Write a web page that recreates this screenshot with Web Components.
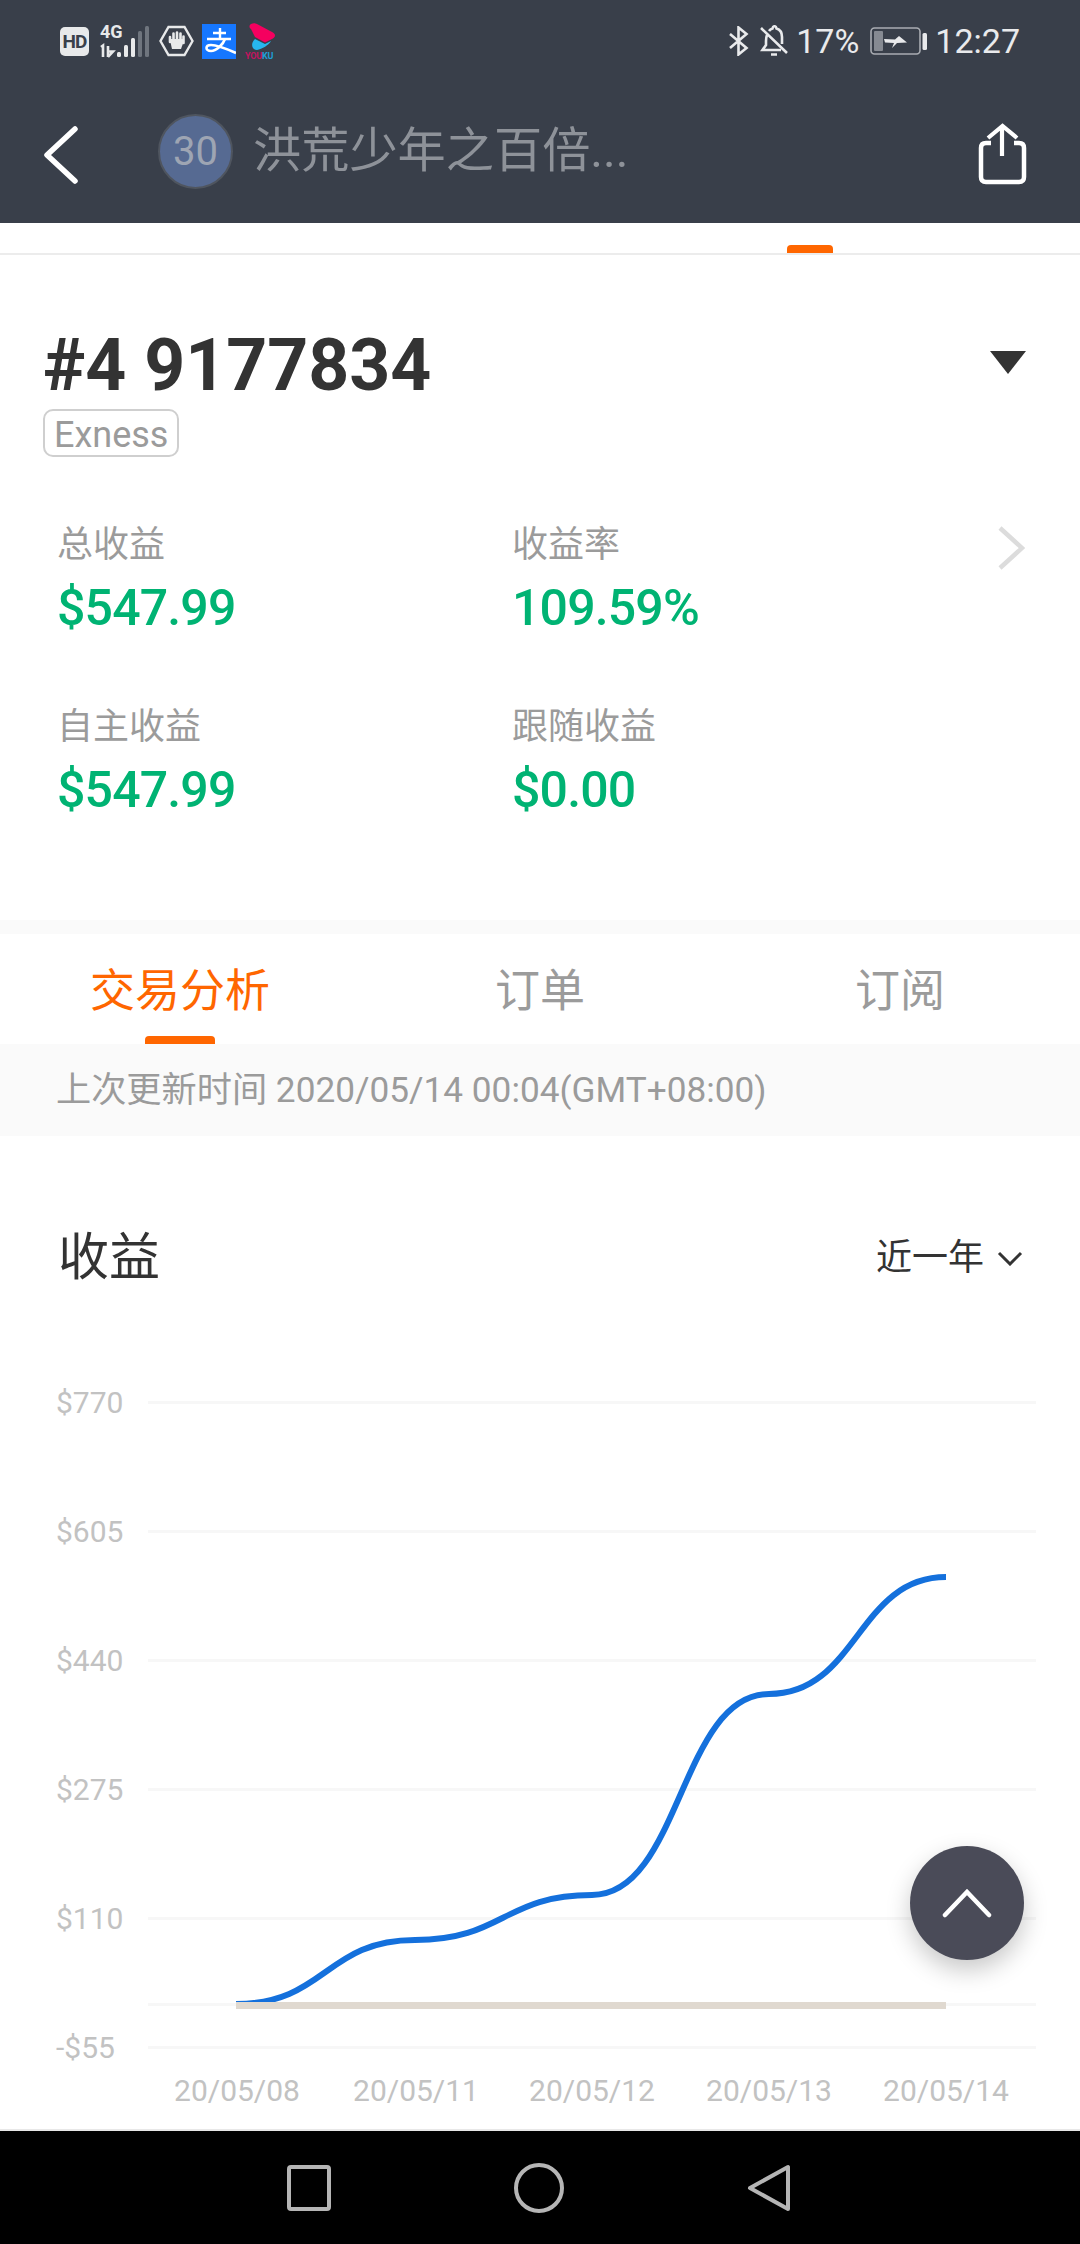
<!DOCTYPE html>
<html lang="zh">
<head>
<meta charset="utf-8">
<title>#4 9177834</title>
<style>
  html, body { margin: 0; padding: 0; background: #fff; }
  body {
    width: 1080px; height: 2244px; overflow: hidden; position: relative;
    font-family: Roboto, "Noto Sans CJK SC", sans-serif;
  }
</style>
</head>
<body>
<app-header title-text="洪荒少年之百倍..." level="30"></app-header>
<section-marker></section-marker>
<account-card number="#4 9177834" broker="Exness">
  <stat-item label="总收益" value="$547.99"></stat-item>
  <stat-item label="收益率" value="109.59%"></stat-item>
  <stat-item label="自主收益" value="$547.99"></stat-item>
  <stat-item label="跟随收益" value="$0.00"></stat-item>
</account-card>
<tab-bar></tab-bar>
<update-strip>上次更新时间 2020/05/14 00:04(GMT+08:00)</update-strip>
<profit-chart></profit-chart>
<scroll-top></scroll-top>
<nav-bar></nav-bar>

<script>
class StatusBar extends HTMLElement {
  constructor() {
    super();
    this.attachShadow({mode: 'open'}).innerHTML = `
      <style>
        :host { display: flex; align-items: center; height: 60px; padding: 11px 60px 0 60px; color: #e9eaec; font-size: 34px; }
        svg { display: block; flex: none; }
        .hd { width: 29px; height: 29px; background: #e8e9ea; border-radius: 5px; color: #393f4a; font: 700 19px/29px Roboto, sans-serif; text-align: center; letter-spacing: -1px; margin-right: 11px; }
        .right { margin-left: auto; display: flex; align-items: center; }
        .t { line-height: 60px; }
      </style>
      <div class="hd">HD</div>
      <svg width="50" height="32" viewBox="0 0 50 32" style="overflow:visible">
        <text x="0" y="13" font-family="Roboto" font-weight="700" font-size="18" fill="#e8e9ea">4G</text>
        <path d="M1 22 L3 20.500 V32 M8 21 V32 M8 32 L13 26.500 H8" stroke="#e8e9ea" stroke-width="2.600" fill="none"/>
        <rect x="17" y="27" width="4" height="5" rx="1.500" fill="#e8e9ea"/>
        <rect x="24" y="20" width="4" height="12" rx="1.500" fill="#e8e9ea"/>
        <rect x="31" y="13" width="4" height="19" rx="1.500" fill="#e8e9ea"/>
        <rect x="38" y="6" width="4" height="26" rx="1.500" fill="#6f757e"/>
        <rect x="45" y="1" width="4" height="31" rx="1.500" fill="#6f757e"/>
      </svg>
      <svg style="margin-left:9px" width="35" height="32" viewBox="0 0 35 32">
        <path d="M9.500 2 H25.500 L33.500 16 L25.500 30 H9.500 L1.500 16 Z" fill="none" stroke="#e8e9ea" stroke-width="2.400"/>
        <path d="M11 12 V17 M14.500 8.500 V16 M18 7.500 V16 M21.500 8.500 V16 M24.500 11.500 V18" stroke="#e8e9ea" stroke-width="2.600" stroke-linecap="round"/>
        <path d="M11 15 L13 24 H22 L24.500 17 V14 H11 Z" fill="#e8e9ea"/>
      </svg>
      <svg style="margin-left:8px" width="34" height="35" viewBox="0 0 34 35">
        <rect width="34" height="35" fill="#1677ff"/>
        <path d="M11 9 H24 M18 4 V14 M5 15 H29" stroke="#fff" stroke-width="2.400" fill="none"/>
        <path d="M23 15 C21 21 14 27 9 27 C3 27 3 21 9 21 C16 21 25 25 34 29" stroke="#fff" stroke-width="2.600" fill="none"/>
      </svg>
      <svg style="margin-left:9px" width="32" height="36" viewBox="0 0 32 36">
        <path d="M6 1 C8 0 10 0 12 1 L27 9 C31 11 31 14 27 16 L20 19.500 L10 14 L6 6 C4 5 4 2 6 1 Z" fill="#f5005f"/>
        <path d="M10 16 L20 21 L26 18 C24 22 17 26 12 27 C7 27 5 21 10 16 Z" fill="#27b6ee"/>
        <text x="0" y="35.500" font-family="Roboto" font-weight="700" font-size="9" letter-spacing="-.2"><tspan fill="#c4135f">YOU</tspan><tspan fill="#1f9fd8">KU</tspan></text>
      </svg>
      <div class="right">
        <svg width="21" height="30" viewBox="0 0 21 30">
          <path d="M2 8 L18.500 22 L10.500 28.500 V1.500 L18.500 8 L2 22" fill="none" stroke="#e9eaec" stroke-width="2.600"/>
        </svg>
        <svg style="margin-left:11px" width="28" height="32" viewBox="0 0 28 32">
          <path d="M7 10 C6.200 12 6 13 6 16 V20 L2.500 25 H21" fill="none" stroke="#e9eaec" stroke-width="2.600"/>
          <path d="M9 6 C10 4.500 11 4 12.500 3.500 C13 .500 16 .500 16.500 3.500 C20 4.500 22 8 22 12 V19" fill="none" stroke="#e9eaec" stroke-width="2.600"/>
          <path d="M1 3 L27 28 M11 29.500 H17" fill="none" stroke="#e9eaec" stroke-width="2.600"/>
        </svg>
        <span class="t" style="margin-left:8px">17%</span>
        <svg style="margin-left:11px" width="58" height="28" viewBox="0 0 58 28">
          <rect x="1" y="1" width="49" height="26" rx="3.500" fill="none" stroke="#a9acb2" stroke-width="1.600"/>
          <rect x="4" y="4" width="9" height="20" rx="1" fill="#868a92"/>
          <path d="M14 12 L25 12.500 L29 9 L37 15.500 L27 16 L22 21 L24 16 L15 15.500 Z" fill="#e9eaec"/>
          <rect x="52.500" y="6" width="4.500" height="17" rx="1.500" fill="#e9eaec"/>
        </svg>
        <span class="t" style="margin-left:7px">12:27</span>
      </div>`;
  }
}

class AppHeader extends HTMLElement {
  constructor() {
    super();
    this.attachShadow({mode: 'open'});
  }
  connectedCallback() {
    this.shadowRoot.innerHTML = `
      <style>
        :host { display: block; height: 223px; background: #393f4a; }
        .bar { display: flex; align-items: center; height: 144px; padding: 8px 52px 0 44px; }
        .back { flex: none; width: 34px; margin-top: 7px; }
        .avatar { flex: none; box-sizing: border-box; width: 75px; height: 75px; margin-left: 80px; border-radius: 50%; background: #566a92; border: 2px solid #4f555f; color: #9ea5b3; font-size: 40px; line-height: 71px; text-align: center; }
        .title { margin-left: 20px; font-size: 48.200px; line-height: 60px; color: #8e9299; white-space: nowrap; }
        .share { flex: none; margin-left: auto; display: block; margin-top: 5px; }
        svg { display: block; }
      </style>
      <status-bar></status-bar>
      <div class="bar">
        <svg class="back" height="58" viewBox="0 0 34 58">
          <path d="M31 3 L3 29 L31 55" fill="none" stroke="#fff" stroke-width="5.500" stroke-linecap="round" stroke-linejoin="round"/>
        </svg>
        <div class="avatar">${this.getAttribute('level')}</div>
        <div class="title">${this.getAttribute('title-text')}</div>
        <svg class="share" width="52" height="62" viewBox="0 0 52 62">
          <path d="M15 20 H10 Q5 20 5 25 V54 Q5 59 10 59 H43 Q48 59 48 54 V25 Q48 20 43 20 H38" fill="none" stroke="#fff" stroke-width="4.500" stroke-linejoin="round"/>
          <path d="M26 33 V3 M12 15 L26.500 3 L41 15" fill="none" stroke="#fff" stroke-width="4.200"/>
        </svg>
      </div>`;
  }
}

class SectionMarker extends HTMLElement {
  constructor() {
    super();
    this.attachShadow({mode: 'open'}).innerHTML = `
      <style>
        :host { display: flex; align-items: flex-end; height: 30px; border-bottom: 2px solid #ececec; padding-left: 787px; }
        div { width: 46px; height: 8px; background: #ff6600; border-radius: 4px 4px 0 0; }
      </style>
      <div></div>`;
  }
}

class StatItem extends HTMLElement {
  constructor() {
    super();
    this.attachShadow({mode: 'open'});
  }
  connectedCallback() {
    this.shadowRoot.innerHTML = `
      <style>
        :host { display: block; }
        .label { font-size: 36px; line-height: 50px; color: #9b9b9b; }
        .value { font-size: 50px; line-height: 62px; font-weight: 500; letter-spacing: -.85px; color: #00b373; margin-top: 7px; }
      </style>
      <div class="label">${this.getAttribute('label')}</div>
      <div class="value">${this.getAttribute('value')}</div>`;
  }
}

class AccountCard extends HTMLElement {
  constructor() {
    super();
    this.attachShadow({mode: 'open'});
  }
  connectedCallback() {
    this.shadowRoot.innerHTML = `
      <style>
        :host { display: block; height: 665px; box-sizing: border-box; padding: 74px 54px 0 43px; position: relative; background: #fff; }
        .head { display: flex; align-items: center; justify-content: space-between; }
        .head svg { margin: -8px 0 0 0; }
        .num { font-size: 71.5px; line-height: 74px; font-weight: 700; color: #333; }
        .tag { display: inline-block; box-sizing: border-box; height: 48px; margin-top: 6px; padding: 0 9px; border: 2px solid #cfcfcf; border-radius: 10px; font-size: 36px; line-height: 48px; color: #9b9b9b; }
        .stats { display: grid; grid-template-columns: 455px 1fr; row-gap: 63px; margin: 63px 0 0 14px; }
        .more { position: absolute; left: 997px; top: 270px; }
        svg { display: block; }
      </style>
      <div class="head">
        <div class="num">${this.getAttribute('number')}</div>
        <svg width="36" height="23" viewBox="0 0 36 23"><path d="M0 0 H36 L18 23 Z" fill="#333"/></svg>
      </div>
      <div class="tag">${this.getAttribute('broker')}</div>
      <div class="stats"><slot></slot></div>
      <svg class="more" width="28" height="46" viewBox="0 0 28 46"><path d="M3 3 L25 23 L3 43" fill="none" stroke="#dcdcdc" stroke-width="4.500"/></svg>`;
  }
}

class TabBar extends HTMLElement {
  constructor() {
    super();
    this.attachShadow({mode: 'open'}).innerHTML = `
      <style>
        :host { display: block; margin-top: 0; border-top: 14px solid #fafafa; height: 110px; background: #fff; position: relative; font-size: 45px; }
        .tabs { display: grid; grid-template-columns: 360px 360px 360px; height: 110px; }
        .tab { text-align: center; line-height: 116px; color: #9b9b9b; }
        .tab.on { color: #ff6600; }
        .tab.on::after { content: ""; display: block; width: 70px; height: 8px; background: #ff6600; border-radius: 4px 4px 0 0; position: absolute; left: 145px; bottom: 0; }
      </style>
      <div class="tabs">
        <div class="tab on">交易分析</div>
        <div class="tab">订单</div>
        <div class="tab">订阅</div>
      </div>`;
  }
}

class UpdateStrip extends HTMLElement {
  constructor() {
    super();
    this.attachShadow({mode: 'open'}).innerHTML = `
      <style>
        :host { display: block; height: 92px; background: #fafafa; padding-left: 56px; font-size: 35.200px; line-height: 92px; color: #9b9b9b; }
      </style>
      <slot></slot>`;
  }
}

class ProfitChart extends HTMLElement {
  constructor() {
    super();
    this.attachShadow({mode: 'open'});
    const top = 1340, h = 789;
    const grid = [1402, 1531, 1660, 1789, 1918, 2004, 2047];
    const yLabels = [['$770', 1402], ['$605', 1531], ['$440', 1660], ['$275', 1789], ['$110', 1918], ['-$55', 2047]];
    const dates = [['20/05/08', 237], ['20/05/11', 416], ['20/05/12', 592], ['20/05/13', 769], ['20/05/14', 946]];
    this.shadowRoot.innerHTML = `
      <style>
        :host { display: block; height: 993px; background: #fff; }
        .head { display: flex; align-items: center; justify-content: space-between; height: 204px; box-sizing: border-box; padding: 40px 57px 0 58px; }
        h2 { margin: 0; font-size: 51px; line-height: 76px; font-weight: 400; color: #333; }
        .range { display: flex; align-items: center; font-size: 36px; line-height: 72px; color: #333; }
        .range svg { margin-left: 13px; }
        svg { display: block; }
        text { font-family: Roboto, sans-serif; fill: #c2c2c2; font-size: 30px; }
      </style>
      <div class="head">
        <h2>收益</h2>
        <div class="range">近一年<svg width="26" height="15" viewBox="0 0 26 15"><path d="M2 2 L13 13 L24 2" fill="none" stroke="#333" stroke-width="3"/></svg></div>
      </div>
      <svg width="1080" height="${h}" viewBox="0 ${top} 1080 ${h}">
        ${grid.map(y => `<rect x="148" y="${y - 1}" width="888" height="3" fill="#f7f7f7"/>`).join('')}
        ${yLabels.map(([t, y]) => `<text x="56" y="${y + 11}">${t}</text>`).join('')}
        <path d="M236 2004 C325.500 2004 325.500 1940 415 1940 C503.500 1940 503.500 1895 592 1895 C680.500 1895 680.500 1694 769 1694 C857.500 1694 857.500 1577 946 1577" fill="none" stroke="#1470dc" stroke-width="6"/>
        <rect x="236" y="2002" width="710" height="7" fill="#e0d9d0"/>
        ${dates.map(([t, x]) => `<text x="${x}" y="2101" text-anchor="middle">${t}</text>`).join('')}
      </svg>`;
  }
}

class ScrollTop extends HTMLElement {
  constructor() {
    super();
    this.attachShadow({mode: 'open'}).innerHTML = `
      <style>
        :host { position: absolute; left: 910px; top: 1846px; width: 114px; height: 114px; border-radius: 50%; background: #4a4b58; box-shadow: 0 10px 24px rgba(0,0,0,.22); display: flex; align-items: center; justify-content: center; }
        svg { display: block; }
      </style>
      <svg width="50" height="30" viewBox="0 0 50 30"><path d="M3 27 L25 4 L47 27" fill="none" stroke="#fff" stroke-width="4.500" stroke-linecap="round"/></svg>`;
  }
}

class NavBar extends HTMLElement {
  constructor() {
    super();
    this.attachShadow({mode: 'open'}).innerHTML = `
      <style>
        :host { position: absolute; left: 0; right: 0; bottom: 0; height: 115px; background: #000; border-top: 2px solid #e8e8e8; box-sizing: border-box; }
        .keys { display: grid; grid-template-columns: 44px 50px 44px; column-gap: 183px; justify-content: center; align-items: center; height: 113px; padding-right: 2px; }
        svg { display: block; }
      </style>
      <div class="keys">
        <svg width="44" height="46" viewBox="0 0 44 46"><rect x="2" y="2" width="40" height="42" rx="2" fill="none" stroke="#b5b5b5" stroke-width="4"/></svg>
        <svg width="50" height="50" viewBox="0 0 50 50"><circle cx="25" cy="25" r="23" fill="none" stroke="#b5b5b5" stroke-width="4"/></svg>
        <svg width="44" height="48" viewBox="0 0 44 48"><path d="M41 3 V45 L3 24 Z" fill="none" stroke="#b5b5b5" stroke-width="4" stroke-linejoin="round"/></svg>
      </div>`;
  }
}

customElements.define('status-bar', StatusBar);
customElements.define('app-header', AppHeader);
customElements.define('section-marker', SectionMarker);
customElements.define('stat-item', StatItem);
customElements.define('account-card', AccountCard);
customElements.define('tab-bar', TabBar);
customElements.define('update-strip', UpdateStrip);
customElements.define('profit-chart', ProfitChart);
customElements.define('scroll-top', ScrollTop);
customElements.define('nav-bar', NavBar);
</script>
</body>
</html>
